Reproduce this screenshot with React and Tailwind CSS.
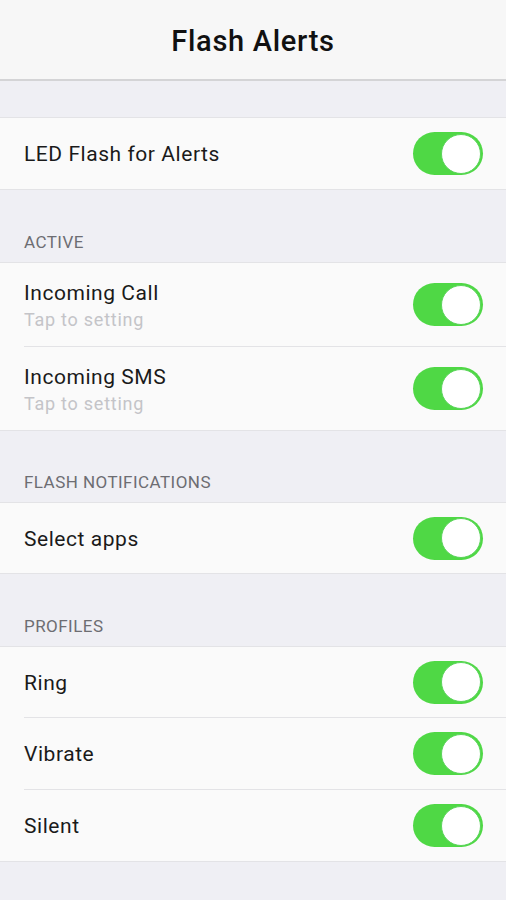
import { Fragment } from "react";

const font = { fontFamily: "Roboto, 'Noto Sans', sans-serif" };

function Toggle() {
  return (
    <div className="relative w-[70px] h-[43px] rounded-full bg-[#4fd845] shrink-0">
      <div className="absolute right-[2px] top-[1.5px] w-[40px] h-[40px] rounded-full bg-white border border-[#5bd45b]" />
    </div>
  );
}

function Row({ title, sub, last, height }) {
  return (
    <div className={`pl-6 ${height}`}>
      <div className={`h-full flex items-center justify-between pr-[23px] ${last ? "" : "border-b border-[#e3e3e6]"}`}>
        <div className="flex flex-col pt-[2px]">
          <span className="text-[21px] leading-[27px] tracking-[0.55px] text-[#1a1a1a]">{title}</span>
          {sub && <span className="text-[18px] leading-[22px] tracking-[0.75px] text-[#c4c4c8] mt-[2px]">{sub}</span>}
        </div>
        <Toggle />
      </div>
    </div>
  );
}

function Group({ label, rows, top }) {
  return (
    <Fragment>
      {label ? (
        <div className={`${top} flex items-end px-6 pb-[10px] text-[17px] leading-[20px] text-[#6d6d72] uppercase tracking-[0.45px]`}>
          {label}
        </div>
      ) : (
        <div className={top} />
      )}
      <div className="bg-[#fafafa] border-y border-[#e3e3e6]">
        {rows.map((r, i) => (
          <Row key={r.title} {...r} last={i === rows.length - 1} />
        ))}
      </div>
    </Fragment>
  );
}

export default function App() {
  return (
    <div className="w-[506px] h-[900px] bg-[#efeff4] overflow-hidden" style={font}>
      <div className="h-[81px] bg-[#f7f7f7] border-b-2 border-[#d4d4d6] flex items-center justify-center">
        <h1 className="text-[29px] font-medium tracking-[0.7px] text-[#111] mt-[4px]">Flash Alerts</h1>
      </div>
      <Group top="h-[36px]" rows={[{ title: "LED Flash for Alerts", height: "h-[71px]" }]} />
      <Group
        top="h-[72px]"
        label="Active"
        rows={[
          { title: "Incoming Call", sub: "Tap to setting", height: "h-[84px]" },
          { title: "Incoming SMS", sub: "Tap to setting", height: "h-[83px]" },
        ]}
      />
      <Group top="h-[71px]" label="Flash Notifications" rows={[{ title: "Select apps", height: "h-[70px]" }]} />
      <Group
        top="h-[72px]"
        label="Profiles"
        rows={[
          { title: "Ring", height: "h-[71px]" },
          { title: "Vibrate", height: "h-[72px]" },
          { title: "Silent", height: "h-[71px]" },
        ]}
      />
    </div>
  );
}
